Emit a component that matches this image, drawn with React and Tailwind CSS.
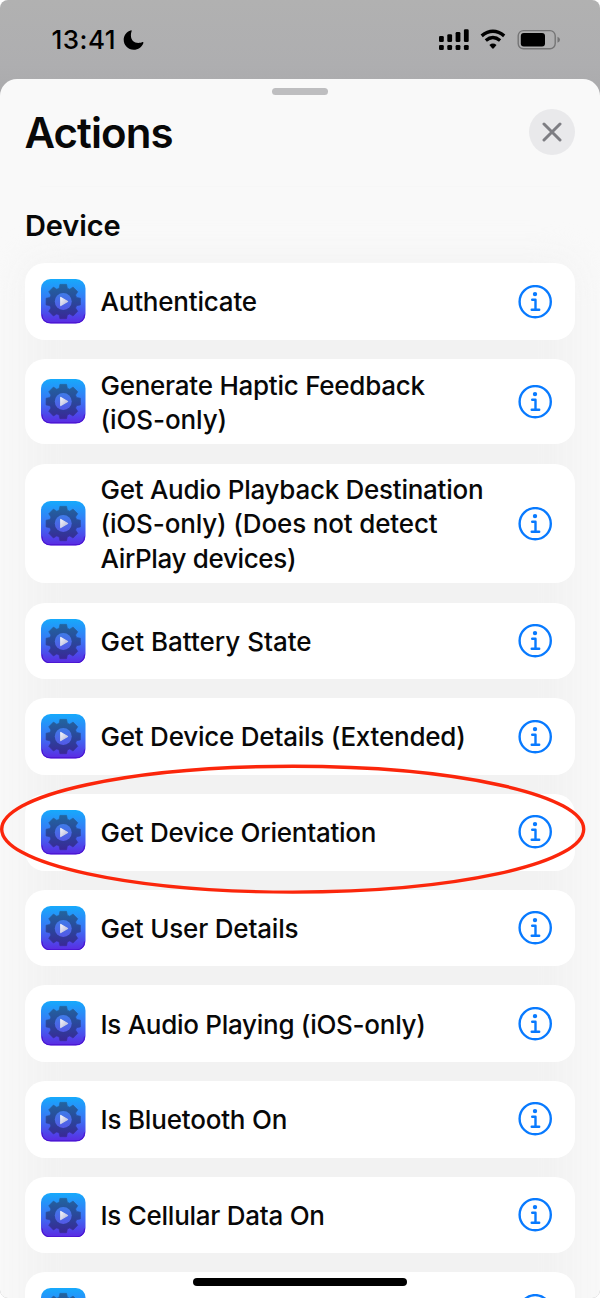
import React from "react";

const actions = [
  { lines: [["Authenticate", "tracking-[-0.2px]"]] },
  {
    lines: [
      ["Generate Haptic Feedback", "tracking-[-0.25px]"],
      ["(iOS-only)", "tracking-[-0.1px]"],
    ],
    size: "h-[85.5px]",
  },
  {
    lines: [
      ["Get Audio Playback Destination", "tracking-[-0.26px]"],
      ["(iOS-only) (Does not detect", "tracking-[-0.15px]"],
      ["AirPlay devices)", "tracking-[-0.35px]"],
    ],
    size: "h-[119.8px]",
  },
  { lines: [["Get Battery State", "tracking-[0px]"]] },
  { lines: [["Get Device Details (Extended)", "tracking-[-0.22px]"]] },
  { lines: [["Get Device Orientation", "tracking-[-0.24px]"]], highlighted: true },
  { lines: [["Get User Details", "tracking-[-0.19px]"]] },
  { lines: [["Is Audio Playing (iOS-only)", "tracking-[-0.28px]"]] },
  { lines: [["Is Bluetooth On", "tracking-[-0.19px]"]] },
  { lines: [["Is Cellular Data On", "tracking-[-0.26px]"]] },
  { lines: [] },
];

function GearIcon() {
  return (
    <svg viewBox="0 0 44 44" className="size-[44.5px] shrink-0">
      <defs>
        <linearGradient id="tile" x1="0" y1="0" x2="0" y2="1">
          <stop offset="0" stopColor="#16aafc" />
          <stop offset="0.5" stopColor="#3a74f5" />
          <stop offset="1" stopColor="#5b29e2" />
        </linearGradient>
        <linearGradient id="gear" gradientUnits="userSpaceOnUse" x1="0" y1="5" x2="0" y2="40">
          <stop offset="0" stopColor="#22659f" />
          <stop offset="0.5" stopColor="#2a479b" />
          <stop offset="1" stopColor="#3a2796" />
        </linearGradient>
        <linearGradient id="hub" x1="0" y1="0" x2="0" y2="1">
          <stop offset="0" stopColor="#3f7be8" />
          <stop offset="1" stopColor="#5358e6" />
        </linearGradient>
        <linearGradient id="play" x1="0" y1="0" x2="1" y2="1">
          <stop offset="0" stopColor="#f4f4fa" />
          <stop offset="1" stopColor="#b5b8da" />
        </linearGradient>
      </defs>
      <rect width="44" height="44" rx="9.5" fill="url(#tile)" />
      <path d="M1 35 Q1 43.3 10 43.3 H34 Q43 43.3 43 35" fill="none" stroke="#4812d0" strokeWidth="1" />
      <path
        d={[0, 45, 90, 135, 180, 225, 270, 315]
          .map((angle) => {
            const a = (angle * Math.PI) / 180;
            const point = (x, y) =>
              `${(22 + x * Math.cos(a) - y * Math.sin(a)).toFixed(2)} ${(22.3 + x * Math.sin(a) + y * Math.cos(a)).toFixed(2)}`;
            return `${angle === 0 ? "M" : "L"}${point(-4.1, -13.2)} L${point(-3.3, -17)} L${point(3.3, -17)} L${point(4.1, -13.2)}`;
          })
          .join(" ") + "Z"}
        fill="url(#gear)"
        stroke="url(#gear)"
        strokeWidth="0.6"
        strokeLinejoin="round"
      />
      <circle cx="22" cy="22.3" r="8.4" fill="url(#hub)" />
      <path d="M19.5 18.2 L26.3 22.2 L19.5 26.3Z" fill="url(#play)" stroke="url(#play)" strokeWidth="1.1" strokeLinejoin="round" />
    </svg>
  );
}

function InfoIcon() {
  return (
    <svg viewBox="0 0 34 34" className="size-[34px] shrink-0" fill="none" stroke="#087aff">
      <circle cx="17.2" cy="16.7" r="15.6" strokeWidth="2.4" />
      <circle cx="17" cy="9.1" r="2.2" fill="#087aff" stroke="none" />
      <path d="M14.2 14.7 H17.5 V24.7 M13.7 24.7 H21.2" strokeWidth="2.4" strokeLinecap="round" strokeLinejoin="round" />
    </svg>
  );
}

function ActionCard({ action }) {
  return (
    <li
      className={`relative flex shrink-0 items-center rounded-[20px] bg-white pl-4 pr-[23px] ${action.size || "h-[76.5px]"}`}
    >
      <GearIcon />
      <div className="ml-[15px] flex-1 whitespace-nowrap pt-[2px] text-[26px] font-[540] leading-[34.2px]">
        {action.lines.map(([line, tracking]) => (
          <div key={line} className={tracking}>{line}</div>
        ))}
      </div>
      <InfoIcon />
      {action.highlighted && (
        <svg viewBox="0 0 600 140" className="pointer-events-none absolute -left-[25px] -top-[35px] z-10 h-[140px] w-[600px]" fill="none">
          <ellipse cx="292.7" cy="70.2" rx="291" ry="62.9" stroke="#fb260b" strokeWidth="3.4" />
        </svg>
      )}
    </li>
  );
}

function StatusBar() {
  return (
    <div className="flex h-[78.5px] shrink-0 items-start pl-[51.5px] pt-[24px] text-black">
      <span className="w-[64.5px] whitespace-nowrap text-[26px] font-medium leading-8 tracking-[0.5px]">13:41</span>
      <svg viewBox="0 0 22 22" className="ml-[6px] mt-[5px] size-[22px]">
        <path d="M8.7 1.4 C4.6 2.6 1.7 6.3 1.7 10.8 C1.7 16.4 6.1 20.7 11.7 20.7 C16.1 20.7 20 18.1 21.4 13.9 C21.6 13.2 21.1 12.8 20.5 13.1 C19.1 13.8 17.9 13.9 16.5 13.9 C11.9 13.9 8.9 10.9 8.9 6.4 C8.9 5 9.1 3.5 9.6 2.3 C9.9 1.6 9.4 1.2 8.7 1.4Z" />
      </svg>
      <svg viewBox="0 0 124 24" className="ml-[293px] mt-[4px] h-6 w-[124px]">
        <rect x="2" y="8" width="4.8" height="6" rx="1.3" />
        <rect x="10.3" y="6.3" width="4.8" height="7.7" rx="1.3" />
        <rect x="18.6" y="4" width="4.8" height="10" rx="1.3" />
        <rect x="26.9" y="1.2" width="4.8" height="12.8" rx="1.3" />
        {[2, 10.3, 18.6, 26.9].map((x) => (
          <rect key={x} x={x} y="17" width="4.8" height="5" rx="1.3" />
        ))}
        <path d="M44.7 7.8 Q55.9 -1.2 67.2 7.8" fill="none" stroke="#000" strokeWidth="3.5" />
        <path d="M48.8 12.5 Q55.9 6.6 63.1 12.5" fill="none" stroke="#000" strokeWidth="3.4" />
        <path d="M52.4 16.9 Q55.9 14 59.5 16.9 L56.8 20.3 Q55.9 21.2 55.1 20.3Z" />
        <rect x="81.2" y="2.6" width="37" height="18.2" rx="5.2" fill="none" stroke="#747475" strokeWidth="1.4" />
        <rect x="83.8" y="5" width="24.2" height="13.5" rx="3" />
        <path d="M120.5 8.8 Q123 9.7 123 11.8 Q123 14 120.5 14.8Z" fill="#747475" />
      </svg>
    </div>
  );
}

export default function App() {
  return (
    <main className="h-[1298px] w-[600px] overflow-hidden bg-white font-['Inter','Liberation_Sans',sans-serif] text-[#080808]">
      <div className="relative flex h-full flex-col overflow-hidden rounded-[8px] bg-linear-to-b from-[#b1b1b1] from-0% via-[#aeaeb0] via-[5%] to-[#a9a9ab] to-[8%]">
        <StatusBar />
        <section className="flex h-[1219.5px] shrink-0 flex-col overflow-hidden rounded-t-[17px] bg-[#f9f9f9]">
          <header className="relative flex h-[107.5px] shrink-0 items-start justify-between pl-[24.5px] pr-[25px]">
            <div className="absolute left-[272px] top-[9px] h-[7.5px] w-[56px] rounded-full bg-[#bebec0]" />
            <h1 className="mt-[29px] text-[42px] font-semibold leading-[50px] tracking-[-0.9px]">Actions</h1>
            <button aria-label="Close" className="mt-[30.5px] flex size-[46px] items-center justify-center rounded-full bg-[#e9e9eb]">
              <svg viewBox="0 0 20 20" className="size-5" stroke="#7e7e83" strokeWidth="3" strokeLinecap="round">
                <path d="M2 2 L18 18 M18 2 L2 18" />
              </svg>
            </button>
          </header>
          <div className="mx-[40px] h-px shrink-0 bg-[#f7f7f7]" />
          <div className="flex-1 px-[25px]">
            <h2 className="relative z-10 pt-[21px] text-[29px] font-semibold leading-9 tracking-[-0.1px]">Device</h2>
            <div className="relative mt-[19.3px]">
              <div className="absolute -inset-x-[2px] -top-[4px] -bottom-[60px] rounded-[24px] bg-[#f2f2f2] blur-[16px]" />
              <ul className="relative flex flex-col gap-[19.2px]">
                {actions.map((action, index) => (
                  <ActionCard key={index} action={action} />
                ))}
              </ul>
            </div>
          </div>
        </section>
        <div className="absolute left-[193px] top-[1278px] h-[8px] w-[214px] rounded-full bg-black" />
      </div>
    </main>
  );
}
